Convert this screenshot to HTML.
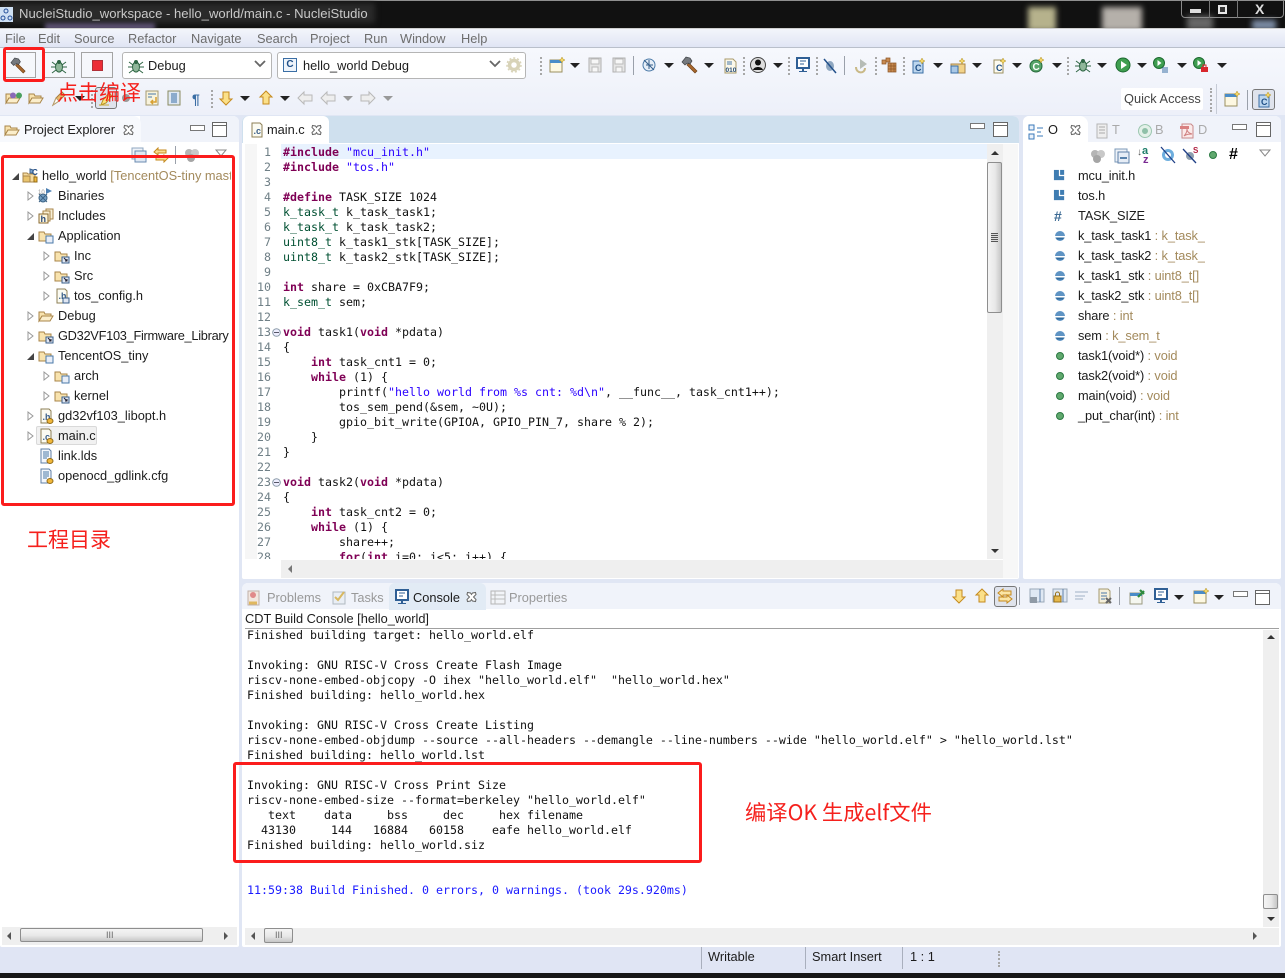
<!DOCTYPE html>
<html lang="zh"><head><meta charset="utf-8"><title>NucleiStudio</title>
<style>
html,body{margin:0;padding:0}
body{width:1285px;height:978px;overflow:hidden;position:relative;background:#e0e6f4;font:12.8px/20px "Liberation Sans","Noto Sans CJK SC",sans-serif;color:#1c1c1c}
div,span.a,svg.i{position:absolute}
.t{position:absolute;white-space:pre;height:20px;line-height:20px}
.ol{letter-spacing:-.12px}
svg.i{width:16px;height:16px;overflow:visible}
.g{color:#8a8a8a}
.m{color:#6d6d6d}
.code{position:absolute;margin:0;font:11.63px/15px "DejaVu Sans Mono","Liberation Mono",monospace;white-space:pre;color:#111}
.k{color:#7f0055;font-weight:bold}
.s{color:#2a00ff}
.y{color:#005032}
.o{color:#a38a5c}
.ln{color:#6f7f86;text-align:right}
.red{position:absolute;border:3px solid #fb1c1c;border-radius:3px;box-sizing:border-box}
.rt{position:absolute;color:#f5201c;white-space:pre;font-family:"Noto Sans CJK SC","Liberation Sans",sans-serif}
.min{position:absolute;width:13px;height:4px;border:1px solid #777;background:#fff;box-sizing:content-box}
.max{position:absolute;width:13px;height:13px;border:1px solid #666;background:#fff;box-sizing:content-box}
.max:before{content:"";position:absolute;left:0;right:0;top:2px;height:1px;background:#666}
.panel{background:#fff;border-radius:6px 6px 2px 2px}
.sb{background:#efefef}
.dots{position:absolute;width:0;border-left:2px dotted #a7a7a7}
.vl{position:absolute;width:1px;background:#9aa0aa}
.btn{position:absolute;box-sizing:border-box;border:1px solid #a4a4a4;background:#f5f7fb}
.arr{position:absolute;width:0;height:0;border-left:5px solid transparent;border-right:5px solid transparent;border-top:5px solid #222}
.th{position:absolute;box-sizing:border-box;border:1px solid #8e8e8e;border-radius:2px;background:linear-gradient(#f4f4f4,#e8e8e8 55%,#c6c6c6)}
.thv{position:absolute;box-sizing:border-box;border:1px solid #8e8e8e;border-radius:2px;background:linear-gradient(90deg,#f4f4f4,#e8e8e8 55%,#c6c6c6)}
</style></head><body>
<svg width="0" height="0" style="position:absolute">
<defs>
<symbol id="fo" viewBox="0 0 16 16"><path d="M1 13V4h5l1 2h6v2H4l-3 5z" fill="#f8e3ae" stroke="#a9864a"/><path d="M1 13l3-5h11l-3 5z" fill="#fbeecb" stroke="#a9864a"/></symbol>
<symbol id="fl" viewBox="0 0 16 16"><path d="M1 13V4h5l1 2h6v7z" fill="#f8e3ae" stroke="#a9864a"/><rect x="8" y="9" width="7" height="6" fill="#dfe6f2" stroke="#3a5f8a"/><path d="M10 10l3 3M13 11v2h-2" stroke="#223" fill="none"/></symbol>
<symbol id="fs" viewBox="0 0 16 16"><path d="M1 13V4h5l1 2h6v7z" fill="#f8e3ae" stroke="#a9864a"/><rect x="8" y="8" width="7" height="7" fill="#e8eef8" stroke="#4a78a8"/></symbol>
<symbol id="h" viewBox="0 0 16 16"><path d="M3 1h8l2 2v12H3z" fill="#fbfbf2" stroke="#8d7f55"/><text x="4.500" y="12" font-size="9" font-family="Liberation Sans" font-weight="bold" fill="#3a5f8a">.h</text><ellipse cx="12" cy="13" rx="3" ry="2.500" fill="#f0b73a" stroke="#946c18"/></symbol>
<symbol id="c" viewBox="0 0 16 16"><path d="M3 1h8l2 2v12H3z" fill="#fbfbf2" stroke="#8d7f55"/><text x="4.500" y="12" font-size="9" font-family="Liberation Sans" font-weight="bold" fill="#3a5f8a">.c</text><ellipse cx="12" cy="13" rx="3" ry="2.500" fill="#f0b73a" stroke="#946c18"/></symbol>
<symbol id="hl" viewBox="0 0 16 16"><path d="M3 1h8l2 2v12H3z" fill="#fbfbf2" stroke="#8d7f55"/><text x="4.500" y="11" font-size="9" font-family="Liberation Sans" font-weight="bold" fill="#3a5f8a">.h</text><rect x="9" y="10" width="6" height="5" fill="#dfe6f2" stroke="#3a5f8a"/></symbol>
<symbol id="tx" viewBox="0 0 16 16"><path d="M3 1h8l2 2v12H3z" fill="#f4f7fc" stroke="#5f7fa6"/><path d="M5 4h6M5 6h6M5 8h6M5 10h4" stroke="#4a78a8"/><ellipse cx="12" cy="13" rx="3" ry="2.500" fill="#f0b73a" stroke="#946c18"/></symbol>
<symbol id="pr" viewBox="0 0 16 16"><path d="M1 5h4l1 1h7v8H1z" fill="#f6dca0" stroke="#a9864a"/><rect x="1" y="8" width="7" height="6" fill="#e9c46f" stroke="#a9864a"/><path d="M8 1l3 1v3H8z" fill="#7ba4d2" stroke="#40658f"/><text x="10" y="7" font-size="8" font-weight="bold" font-family="Liberation Sans" fill="#244f86">C</text><path d="M12 9h3v5h-3z" fill="#f0b73a" stroke="#946c18"/></symbol>
<symbol id="bin" viewBox="0 0 16 16"><circle cx="6" cy="10" r="4" fill="#76a0c4" stroke="#3b6284"/><path d="M2 6l8 8M10 6l-8 8" stroke="#3b6284"/><path d="M9 0l6 3-6 3z" fill="#4d80b3"/><text x="1" y="6" font-size="6" fill="#999" font-family="Liberation Sans">10</text></symbol>
<symbol id="inc" viewBox="0 0 16 16"><path d="M8 1h7v10H8z" fill="#f7efd6" stroke="#a9864a"/><path d="M5 3h7v10H5z" fill="#f9efd3" stroke="#a9864a"/><rect x="1" y="6" width="9" height="9" fill="#fff6dc" stroke="#8a6a30"/><text x="2.500" y="14" font-size="9" font-weight="bold" fill="#2b4b7a" font-family="Liberation Sans">h</text></symbol>
<symbol id="hammer" viewBox="0 0 18 18"><path d="M8 7l8 8-2 2-8-8z" fill="#a8682e" stroke="#6e4018" stroke-width=".7"/><path d="M1 6l4-5 4 1 2 3-2 3-2-1-2 1-1 1z" fill="#75797e" stroke="#3f4246" stroke-width=".7"/></symbol>
<symbol id="bug" viewBox="0 0 16 16"><ellipse cx="8" cy="9" rx="3.500" ry="5" fill="#8fb79a" stroke="#2e6644"/><circle cx="8" cy="4" r="2" fill="#2e6644"/><path d="M1 4l4 3M15 4l-4 3M0 9h4M16 9h-4M1 15l4-3M15 15l-4-3" stroke="#2e6644"/></symbol>
<symbol id="newd" viewBox="0 0 16 16"><rect x="1" y="3" width="12" height="12" fill="#fdf8e2" stroke="#9a8f60"/><rect x="1" y="3" width="12" height="3" fill="#4a8cc8"/><path d="M13 0l1 2 2 1-2 1-1 2-1-2-2-1 2-1z" fill="#f3d56a" stroke="#b09020" stroke-width=".5"/></symbol>
<symbol id="sv" viewBox="0 0 16 16"><path d="M2 1h12v14H2z" fill="#e6e6e6" stroke="#b0b0b0"/><path d="M4 2h8v5H4zM5 10h6v5H5z" fill="#f7f7f7" stroke="#bbb"/></symbol>
<symbol id="gl" viewBox="0 0 16 16"><circle cx="7" cy="8" r="6" fill="#e6eef7" stroke="#4b7aa8"/><path d="M2 3l10 10M4 8h7M7 3v9" stroke="#355e8a"/></symbol>
<symbol id="bf" viewBox="0 0 16 16"><path d="M3 1h8l3 3v11H3z" fill="#fbf8ea" stroke="#a99a6a"/><path d="M5 4h5M5 6h5" stroke="#4a78a8"/><text x="3.500" y="14" font-size="6.500" font-weight="bold" fill="#264d78" font-family="Liberation Sans">010</text></symbol>
<symbol id="usr" viewBox="0 0 16 16"><circle cx="8" cy="8" r="7.500" fill="#ddd" stroke="#444"/><circle cx="8" cy="5.500" r="3" fill="#111"/><path d="M3 13c1-4 9-4 10 0z" fill="#111"/></symbol>
<symbol id="mon" viewBox="0 0 16 16"><rect x="2" y="1" width="12" height="10" fill="#fff" stroke="#2f5f95" stroke-width="2"/><path d="M5 4h6M5 7h4" stroke="#2f5f95"/><path d="M4 14h8v1H4zM7 11h2v3H7z" fill="#2f5f95"/></symbol>
<symbol id="slash" viewBox="0 0 16 16"><ellipse cx="8" cy="8" rx="4" ry="5" fill="#8fa7c0"/><path d="M2 1l12 14" stroke="#22508a" stroke-width="1.500"/></symbol>
<symbol id="rerun" viewBox="0 0 16 16"><path d="M3 9c0 7 9 7 9 1" fill="none" stroke="#c9b987" stroke-width="2"/><path d="M7 1l7 5-7 5z" fill="#b6bcb6"/></symbol>
<symbol id="grid" viewBox="0 0 16 16"><path d="M5 1h4v4H5zM1 3h4v4H1zM7 6h8v9H7z" fill="#c88a50" stroke="#8c5626" stroke-width=".7"/><path d="M7 9h8M7 12h8M10 6v9M13 6v9" stroke="#8c5626" stroke-width=".7"/></symbol>
<symbol id="nc" viewBox="0 0 16 16"><path d="M3 3h10v12H3z" fill="#bcd6ee" stroke="#3a6ea5"/><text x="5" y="13" font-size="9" font-weight="bold" fill="#1f4f87" font-family="Liberation Sans">C</text><path d="M12 0l1 2 2 1-2 1-1 2-1-2-2-1 2-1z" fill="#f3d56a" stroke="#b09020" stroke-width=".5"/></symbol>
<symbol id="nf" viewBox="0 0 16 16"><path d="M1 6h14v9H1z" fill="#f2d38a" stroke="#a9864a"/><rect x="1" y="8" width="7" height="7" fill="#a9c8e6" stroke="#3a6ea5"/><path d="M12 0l1 2 2 1-2 1-1 2-1-2-2-1 2-1z" fill="#f3d56a" stroke="#b09020" stroke-width=".5"/></symbol>
<symbol id="nh" viewBox="0 0 16 16"><path d="M3 2h9v13H3z" fill="#fdfbf0" stroke="#9a8f60"/><text x="5" y="13" font-size="9" font-weight="bold" fill="#1f4f87" font-family="Liberation Sans">C</text><path d="M12 0l1 2 2 1-2 1-1 2-1-2-2-1 2-1z" fill="#f3d56a" stroke="#b09020" stroke-width=".5"/></symbol>
<symbol id="ng" viewBox="0 0 16 16"><circle cx="7" cy="9" r="6" fill="#57a46a" stroke="#24683a"/><text x="3.500" y="13" font-size="10" font-weight="bold" fill="#fff" font-family="Liberation Sans">C</text><path d="M12 0l1 2 2 1-2 1-1 2-1-2-2-1 2-1z" fill="#f3d56a" stroke="#b09020" stroke-width=".5"/></symbol>
<symbol id="run" viewBox="0 0 16 16"><circle cx="8" cy="8" r="7" fill="#3f9e50" stroke="#1d6a30"/><path d="M6 4l6 4-6 4z" fill="#fff"/></symbol>
<symbol id="run2" viewBox="0 0 16 16"><circle cx="6" cy="6" r="5.500" fill="#3f9e50" stroke="#1d6a30"/><path d="M4.500 3l4 3-4 3z" fill="#fff"/><path d="M9 11h6M9 13h6M9 15h6" stroke="#3a6ea5"/></symbol>
<symbol id="run3" viewBox="0 0 16 16"><circle cx="6" cy="6" r="5.500" fill="#3f9e50" stroke="#1d6a30"/><path d="M4.500 3l4 3-4 3z" fill="#fff"/><rect x="8" y="10" width="7" height="5" fill="#d8262c"/><path d="M10 10V8h3v2" fill="none" stroke="#d8262c"/></symbol>
<symbol id="x" viewBox="0 0 12 12"><path d="M1.500 1.500l3 .5 1 1.500 1-1.500 3-.5.5 2-2.500 2.500 2.500 2.500-.5 2-3-.5-1-1.500-1 1.500-3 .5-.5-2L3.500 6 1 3.500z" fill="#fff" stroke="#666"/></symbol>
<symbol id="ua" viewBox="0 0 16 16"><path d="M8 1l6 6h-3v7H5V7H2z" fill="#fbe089" stroke="#c58a1e"/></symbol>
<symbol id="da" viewBox="0 0 16 16"><path d="M8 15l6-6h-3V2H5v7H2z" fill="#fbe089" stroke="#c58a1e"/></symbol>
<symbol id="sync" viewBox="0 0 16 16"><path d="M1 5l5-4v2h8v4H6v2zM15 11l-5 4v-2H2V9h8V7z" fill="#fbe6a6" stroke="#c58a1e"/></symbol>
<symbol id="lar" viewBox="0 0 16 16"><path d="M1 8l6-6v3h8v6H7v3z" fill="#eee" stroke="#b8b8b8"/></symbol>
<symbol id="rar" viewBox="0 0 16 16"><path d="M15 8L9 2v3H1v6h8v3z" fill="#eee" stroke="#b8b8b8"/></symbol>
<symbol id="cfg" viewBox="0 0 16 16"><circle cx="8" cy="8" r="4.500" fill="none" stroke="#d8d3b8" stroke-width="3.500"/><circle cx="8" cy="8" r="7" fill="none" stroke="#d8d3b8" stroke-width="1.500" stroke-dasharray="2 2"/></symbol>
<symbol id="col" viewBox="0 0 16 16"><rect x="1" y="1" width="11" height="11" fill="#eef2f8" stroke="#8fa7c0"/><rect x="4" y="4" width="11" height="11" fill="#dfe8f3" stroke="#6b8bb0"/></symbol>
<symbol id="link" viewBox="0 0 16 16"><path d="M1 5l4-4v2h8v3H5v2zM15 11l-4 4v-2H3v-3h8V8z" fill="#f9dd90" stroke="#c58a1e"/></symbol>
<symbol id="gray" viewBox="0 0 16 16"><circle cx="5" cy="6" r="4" fill="#b5b5b5"/><circle cx="11" cy="6" r="4" fill="#c8c8c8"/><circle cx="7" cy="11" r="4" fill="#a5a5a5"/></symbol>
<symbol id="inchd" viewBox="0 0 14 14"><path d="M1 1h11v11H1z" fill="#3f7db2"/><path d="M7 0v7h6" fill="none" stroke="#fff" stroke-width="1.300"/></symbol>
<symbol id="field" viewBox="0 0 12 12"><circle cx="6" cy="6" r="5" fill="#5f94c4"/><path d="M1 6h10v1.500H1z" fill="#fff"/><path d="M2 7.500h8l-1 2H3z" fill="#2f6a9c"/></symbol>
<symbol id="fn" viewBox="0 0 10 10"><circle cx="5" cy="5" r="3.500" fill="#60a86e" stroke="#2b7a42"/></symbol>
</defs></svg>

<!-- title bar -->
<div style="left:0;top:0;width:1285px;height:28px;background:#111;overflow:hidden">
 <div style="left:0;top:0;width:1285px;height:1px;background:#8f8f8f"></div>
 <div style="left:0;top:3px;width:375px;height:20px;background:#2a2a2a;filter:blur(3px)"></div>
 <div style="left:1028px;top:7px;width:28px;height:24px;background:#b6b28c;filter:blur(3px)"></div>
 <div style="left:1102px;top:7px;width:40px;height:24px;background:#b5b0aa;filter:blur(3px)"></div>
 <div style="left:1187px;top:16px;width:26px;height:14px;background:#666;filter:blur(3px)"></div>
 <div style="left:1252px;top:20px;width:24px;height:10px;background:#7d8da6;filter:blur(3px)"></div>
 <div style="left:45px;top:23px;width:110px;height:8px;background:#5a5070;filter:blur(2px)"></div>
 <div style="left:0;top:7px;width:13px;height:15px;background:#cfe0f4"></div>
 <svg class="i" style="left:0;top:7px;width:13px;height:15px" viewBox="0 0 13 15"><circle cx="6" cy="4" r="2" fill="none" stroke="#26509a"/><circle cx="3" cy="11" r="2" fill="none" stroke="#26509a"/><circle cx="10" cy="11" r="2" fill="none" stroke="#26509a"/></svg>
 <span class="t" style="left:19px;top:4px;color:#c9c9c9;font-size:13.100px">NucleiStudio_workspace - hello_world/main.c - NucleiStudio</span>
 <div style="left:1181px;top:-1px;width:103px;height:19px;border:1px solid #8a8a8a;border-radius:0 0 4px 4px;box-sizing:border-box"></div>
 <div style="left:1209px;top:-1px;width:1px;height:19px;background:#777"></div>
 <div style="left:1237px;top:-1px;width:1px;height:19px;background:#777"></div>
 <div style="left:1190px;top:9px;width:11px;height:4px;background:#ddd"></div>
 <div style="left:1218px;top:5px;width:9px;height:9px;border:2px solid #e6e6e6;box-sizing:border-box;background:#333"></div>
 <span class="t" style="left:1255px;top:-1px;color:#ddd;font-weight:bold;font-size:14px">X</span>
</div>

<!-- menu -->
<div style="left:0;top:28px;width:1285px;height:19px;background:linear-gradient(#f3f5fb,#e0e5f4);border-top:1px solid #cfcfcf;box-sizing:border-box"></div>
<div style="left:0;top:47px;width:1285px;height:1px;background:#b9bfca"></div>
<span class="t m" style="left:5px;top:29px">File</span>
<span class="t m" style="left:38px;top:29px">Edit</span>
<span class="t m" style="left:74px;top:29px">Source</span>
<span class="t m" style="left:128px;top:29px">Refactor</span>
<span class="t m" style="left:191px;top:29px">Navigate</span>
<span class="t m" style="left:257px;top:29px">Search</span>
<span class="t m" style="left:310px;top:29px">Project</span>
<span class="t m" style="left:364px;top:29px">Run</span>
<span class="t m" style="left:400px;top:29px">Window</span>
<span class="t m" style="left:461px;top:29px">Help</span>

<!-- toolbars -->
<div style="left:0;top:48px;width:1285px;height:67px;background:linear-gradient(#f6f8fd,#edf0f9)"></div>
<div class="btn" style="left:5px;top:52px;width:31px;height:26px"></div>
<svg class="i" style="left:10px;top:57px;width:17px;height:17px"><use href="#hammer"/></svg>
<div class="btn" style="left:44px;top:52px;width:31px;height:26px"></div>
<svg class="i" style="left:51px;top:58px"><use href="#bug"/></svg>
<div class="btn" style="left:81px;top:52px;width:32px;height:26px"></div>
<div style="left:92px;top:60px;width:11px;height:11px;background:#ec2d36;border:1px solid #b03038;box-sizing:border-box"></div>
<div style="left:122px;top:52px;width:150px;height:27px;background:#fff;border:1px solid #b5b5b5;border-radius:3px;box-sizing:border-box"></div>
<svg class="i" style="left:128px;top:58px"><use href="#bug"/></svg>
<span class="t" style="left:148px;top:56px">Debug</span>
<svg class="i" style="left:254px;top:60px;width:12px;height:8px" viewBox="0 0 12 8"><path d="M1 1l5 5 5-5" fill="none" stroke="#666" stroke-width="1.800"/></svg>
<div style="left:277px;top:52px;width:249px;height:27px;background:#fff;border:1px solid #b5b5b5;border-radius:3px;box-sizing:border-box"></div>
<div style="left:283px;top:58px;width:14px;height:14px;background:#eef4fb;border:1px solid #3a6ea5;box-sizing:border-box;color:#1f4f87;font:bold 10px/12px 'Liberation Sans';text-align:center">C</div>
<span class="t" style="left:303px;top:56px">hello_world Debug</span>
<svg class="i" style="left:489px;top:60px;width:12px;height:8px" viewBox="0 0 12 8"><path d="M1 1l5 5 5-5" fill="none" stroke="#666" stroke-width="1.800"/></svg>
<svg class="i" style="left:506px;top:57px"><use href="#cfg"/></svg>

<div class="dots" style="left:540px;top:57px;height:18px"></div>
<svg class="i" style="left:549px;top:57px"><use href="#newd"/></svg><div class="arr" style="left:570px;top:63px"></div>
<svg class="i" style="left:587px;top:57px"><use href="#sv"/></svg>
<svg class="i" style="left:611px;top:57px"><use href="#sv"/></svg>
<div class="vl" style="left:633px;top:56px;height:19px"></div>
<svg class="i" style="left:642px;top:57px"><use href="#gl"/></svg><div class="arr" style="left:664px;top:63px"></div>
<svg class="i" style="left:681px;top:56px;width:18px;height:18px"><use href="#hammer"/></svg><div class="arr" style="left:704px;top:63px"></div>
<svg class="i" style="left:722px;top:58px"><use href="#bf"/></svg>
<div class="dots" style="left:743px;top:57px;height:18px"></div>
<svg class="i" style="left:750px;top:57px"><use href="#usr"/></svg><div class="arr" style="left:773px;top:63px"></div>
<div class="dots" style="left:788px;top:57px;height:18px"></div>
<svg class="i" style="left:795px;top:57px"><use href="#mon"/></svg>
<div class="dots" style="left:816px;top:57px;height:18px"></div>
<svg class="i" style="left:822px;top:58px"><use href="#slash"/></svg>
<div class="vl" style="left:844px;top:56px;height:19px"></div>
<svg class="i" style="left:853px;top:58px"><use href="#rerun"/></svg>
<div class="dots" style="left:875px;top:57px;height:18px"></div>
<svg class="i" style="left:881px;top:57px"><use href="#grid"/></svg>
<div class="dots" style="left:903px;top:57px;height:18px"></div>
<svg class="i" style="left:910px;top:58px"><use href="#nc"/></svg><div class="arr" style="left:933px;top:63px"></div>
<svg class="i" style="left:950px;top:58px"><use href="#nf"/></svg><div class="arr" style="left:972px;top:63px"></div>
<svg class="i" style="left:991px;top:58px"><use href="#nh"/></svg><div class="arr" style="left:1012px;top:63px"></div>
<svg class="i" style="left:1029px;top:57px"><use href="#ng"/></svg><div class="arr" style="left:1052px;top:63px"></div>
<div class="dots" style="left:1067px;top:57px;height:18px"></div>
<svg class="i" style="left:1075px;top:57px"><use href="#bug"/></svg><div class="arr" style="left:1097px;top:63px"></div>
<svg class="i" style="left:1115px;top:57px"><use href="#run"/></svg><div class="arr" style="left:1137px;top:63px"></div>
<svg class="i" style="left:1153px;top:57px"><use href="#run2"/></svg><div class="arr" style="left:1177px;top:63px"></div>
<svg class="i" style="left:1193px;top:57px"><use href="#run3"/></svg><div class="arr" style="left:1217px;top:63px"></div>

<!-- row 2 -->
<svg class="i" style="left:5px;top:90px"><use href="#fo"/></svg>
<svg class="i" style="left:9px;top:92px;width:14px;height:7px" viewBox="0 0 14 7"><circle cx="4" cy="3.500" r="3" fill="#8a6ab8"/><circle cx="10" cy="3.500" r="3" fill="#4aa060"/></svg>
<svg class="i" style="left:28px;top:90px"><use href="#fo"/></svg>
<svg class="i" style="left:50px;top:90px" viewBox="0 0 16 16"><path d="M3 15l3-7 6-6 3 3-6 6z" fill="#e8b86a" stroke="#a87a3a"/><path d="M3 15l3-7 3 3z" fill="#fff" stroke="#b8a070"/></svg>
<div class="arr" style="left:75px;top:96px"></div>
<div class="dots" style="left:91px;top:90px;height:18px"></div>
<div style="left:95px;top:87px;width:22px;height:22px;border:1px solid #777;border-radius:3px;background:#dfe3ec;box-sizing:border-box"></div>
<svg class="i" style="left:98px;top:90px" viewBox="0 0 16 16"><path d="M3 15l2-5 6-7 3 3-6 7z" fill="#fbe27a" stroke="#b89020"/><path d="M1 15h10" stroke="#c8a830"/></svg>
<svg class="i" style="left:121px;top:93px;width:10px;height:10px" viewBox="0 0 10 10"><circle cx="5" cy="5" r="4" fill="#9a9a9a"/></svg>
<svg class="i" style="left:144px;top:90px" viewBox="0 0 16 16"><path d="M2 1h12v14H2z" fill="#f8f3dc" stroke="#a59a70"/><path d="M4 4h8M4 7h4" stroke="#4a78a8"/><path d="M12 7v5H7M9 10l-2 2 2 2" fill="none" stroke="#d8a030" stroke-width="1.500"/></svg>
<svg class="i" style="left:166px;top:90px" viewBox="0 0 16 16"><path d="M2 1h12v14H2z" fill="#dfe8f3" stroke="#8a8a60"/><path d="M5 4h6M5 6h6M5 8h6M5 10h6M5 12h6" stroke="#3a6ea5"/></svg>
<span class="t" style="left:192px;top:89px;color:#3a6ea5;font-weight:bold;font-size:14px">¶</span>
<div class="dots" style="left:211px;top:90px;height:18px"></div>
<svg class="i" style="left:218px;top:90px"><use href="#da"/></svg><div class="arr" style="left:240px;top:96px"></div>
<svg class="i" style="left:258px;top:90px"><use href="#ua"/></svg><div class="arr" style="left:280px;top:96px"></div>
<svg class="i" style="left:297px;top:90px"><use href="#lar"/></svg>
<svg class="i" style="left:320px;top:90px"><use href="#lar"/></svg><div class="arr" style="left:343px;top:96px;border-top-color:#999"></div>
<svg class="i" style="left:360px;top:90px"><use href="#rar"/></svg><div class="arr" style="left:383px;top:96px;border-top-color:#999"></div>
<div style="left:1121px;top:88px;width:82px;height:22px;background:#fff;border-radius:2px"></div>
<span class="t" style="left:1124px;top:89px;color:#444">Quick Access</span>
<div class="dots" style="left:1210px;top:88px;height:24px"></div>
<div class="vl" style="left:1216px;top:84px;height:30px;background:#c6cbd6"></div>
<svg class="i" style="left:1224px;top:91px"><use href="#newd"/></svg>
<div class="vl" style="left:1247px;top:90px;height:20px"></div>
<div style="left:1252px;top:89px;width:23px;height:21px;border:1px solid #777;border-radius:3px;background:#dfe3ec;box-sizing:border-box"></div>
<svg class="i" style="left:1256px;top:92px"><use href="#nc"/></svg>

<!-- left panel -->
<div class="panel" style="left:0;top:116px;width:239px;height:831px"></div>
<div style="left:140px;top:116px;width:99px;height:26px;background:#f0f3fa;border-radius:0 6px 0 0"></div>
<div style="left:0;top:116px;width:141px;height:26px;background:#f7f9fd;border-radius:0 8px 0 0"></div>
<svg class="i" style="left:4px;top:122px"><use href="#fo"/></svg>
<span class="t" style="left:24px;top:120px">Project Explorer</span>
<svg class="i" style="left:123px;top:124px;width:12px;height:12px"><use href="#x"/></svg>
<div class="min" style="left:190px;top:125px"></div><div class="max" style="left:212px;top:122px"></div>
<svg class="i" style="left:131px;top:147px"><use href="#col"/></svg>
<svg class="i" style="left:153px;top:147px"><use href="#link"/></svg>
<div class="vl" style="left:175px;top:146px;height:18px"></div>
<svg class="i" style="left:184px;top:147px"><use href="#gray"/></svg>
<svg class="i" style="left:215px;top:149px;width:12px;height:8px" viewBox="0 0 12 8"><path d="M1 1h10L6 7z" fill="#fff" stroke="#888"/></svg>

<div style="left:12px;top:173px;width:0;height:0;border-left:7px solid transparent;border-bottom:7px solid #444"></div>
<svg class="i" style="left:22px;top:168px"><use href="#pr"/></svg>
<span class="t" style="left:42px;top:166px;width:189px;overflow:hidden">hello_world <span class="o">[TencentOS-tiny master]</span></span>
<svg class="i" style="left:27px;top:191px;width:7px;height:10px" viewBox="0 0 7 10"><path d="M1 1l5 4-5 4z" fill="#fff" stroke="#999"/></svg>
<svg class="i" style="left:37px;top:188px"><use href="#bin"/></svg><span class="t" style="left:58px;top:186px">Binaries</span>
<svg class="i" style="left:27px;top:211px;width:7px;height:10px" viewBox="0 0 7 10"><path d="M1 1l5 4-5 4z" fill="#fff" stroke="#999"/></svg>
<svg class="i" style="left:38px;top:208px"><use href="#inc"/></svg><span class="t" style="left:58px;top:206px">Includes</span>
<div style="left:27px;top:233px;width:0;height:0;border-left:7px solid transparent;border-bottom:7px solid #444"></div>
<svg class="i" style="left:38px;top:228px"><use href="#fs"/></svg><span class="t" style="left:58px;top:226px">Application</span>
<svg class="i" style="left:43px;top:251px;width:7px;height:10px" viewBox="0 0 7 10"><path d="M1 1l5 4-5 4z" fill="#fff" stroke="#999"/></svg>
<svg class="i" style="left:54px;top:248px"><use href="#fl"/></svg><span class="t" style="left:74px;top:246px">Inc</span>
<svg class="i" style="left:43px;top:271px;width:7px;height:10px" viewBox="0 0 7 10"><path d="M1 1l5 4-5 4z" fill="#fff" stroke="#999"/></svg>
<svg class="i" style="left:54px;top:268px"><use href="#fl"/></svg><span class="t" style="left:74px;top:266px">Src</span>
<svg class="i" style="left:43px;top:291px;width:7px;height:10px" viewBox="0 0 7 10"><path d="M1 1l5 4-5 4z" fill="#fff" stroke="#999"/></svg>
<svg class="i" style="left:54px;top:288px"><use href="#hl"/></svg><span class="t" style="left:74px;top:286px">tos_config.h</span>
<svg class="i" style="left:27px;top:311px;width:7px;height:10px" viewBox="0 0 7 10"><path d="M1 1l5 4-5 4z" fill="#fff" stroke="#999"/></svg>
<svg class="i" style="left:38px;top:308px"><use href="#fo"/></svg><span class="t" style="left:58px;top:306px">Debug</span>
<svg class="i" style="left:27px;top:331px;width:7px;height:10px" viewBox="0 0 7 10"><path d="M1 1l5 4-5 4z" fill="#fff" stroke="#999"/></svg>
<svg class="i" style="left:38px;top:328px"><use href="#fl"/></svg><span class="t" style="left:58px;top:326px;letter-spacing:-.28px">GD32VF103_Firmware_Library</span>
<div style="left:27px;top:353px;width:0;height:0;border-left:7px solid transparent;border-bottom:7px solid #444"></div>
<svg class="i" style="left:38px;top:348px"><use href="#fs"/></svg><span class="t" style="left:58px;top:346px">TencentOS_tiny</span>
<svg class="i" style="left:43px;top:371px;width:7px;height:10px" viewBox="0 0 7 10"><path d="M1 1l5 4-5 4z" fill="#fff" stroke="#999"/></svg>
<svg class="i" style="left:54px;top:368px"><use href="#fs"/></svg><span class="t" style="left:74px;top:366px">arch</span>
<svg class="i" style="left:43px;top:391px;width:7px;height:10px" viewBox="0 0 7 10"><path d="M1 1l5 4-5 4z" fill="#fff" stroke="#999"/></svg>
<svg class="i" style="left:54px;top:388px"><use href="#fl"/></svg><span class="t" style="left:74px;top:386px">kernel</span>
<svg class="i" style="left:27px;top:411px;width:7px;height:10px" viewBox="0 0 7 10"><path d="M1 1l5 4-5 4z" fill="#fff" stroke="#999"/></svg>
<svg class="i" style="left:38px;top:408px"><use href="#h"/></svg><span class="t" style="left:58px;top:406px">gd32vf103_libopt.h</span>
<svg class="i" style="left:27px;top:431px;width:7px;height:10px" viewBox="0 0 7 10"><path d="M1 1l5 4-5 4z" fill="#fff" stroke="#999"/></svg>
<div style="left:36px;top:426px;width:61px;height:19px;background:#f1f1f1;border:1px solid #d9d9d9;border-radius:2px;box-sizing:border-box"></div>
<svg class="i" style="left:38px;top:428px"><use href="#c"/></svg><span class="t" style="left:58px;top:426px">main.c</span>
<svg class="i" style="left:38px;top:448px"><use href="#tx"/></svg><span class="t" style="left:58px;top:446px">link.lds</span>
<svg class="i" style="left:38px;top:468px"><use href="#tx"/></svg><span class="t" style="left:58px;top:466px">openocd_gdlink.cfg</span>

<div class="sb" style="left:2px;top:927px;width:235px;height:18px"></div>
<div class="th" style="left:20px;top:928px;width:183px;height:14px"></div>
<span class="t" style="left:106px;top:925px;font-size:9px;color:#666">III</span>
<div style="left:7px;top:932px;width:0;height:0;border-top:4px solid transparent;border-bottom:4px solid transparent;border-right:4px solid #555"></div>
<div style="left:224px;top:932px;width:0;height:0;border-top:4px solid transparent;border-bottom:4px solid transparent;border-left:4px solid #555"></div>

<!-- editor -->
<div class="panel" style="left:242px;top:116px;width:777px;height:463px"></div>
<div style="left:242px;top:116px;width:777px;height:27px;background:#cfe0ee;border-radius:6px 6px 0 0"></div>
<div style="left:243px;top:116px;width:86px;height:28px;background:#fff;border-radius:6px 6px 0 0"></div>
<svg class="i" style="left:249px;top:122px" viewBox="0 0 16 16"><path d="M3 1h8l2 2v12H3z" fill="#fbfbf2" stroke="#8d7f55"/><text x="4.500" y="12" font-size="9" font-family="Liberation Sans" font-weight="bold" fill="#3a5f8a">.c</text></svg>
<span class="t" style="left:267px;top:120px">main.c</span>
<svg class="i" style="left:311px;top:124px;width:12px;height:12px"><use href="#x"/></svg>
<div class="min" style="left:970px;top:123px"></div><div class="max" style="left:993px;top:122px"></div>
<div style="left:245px;top:144px;width:12px;height:415px;background:#f6f6f6"></div>
<div style="left:281px;top:144px;width:706px;height:15px;background:#e8f2fe"></div>
<pre class="code ln" style="left:245px;top:145px;width:26px;height:414px;overflow:hidden">1
2
3
4
5
6
7
8
9
10
11
12
13
14
15
16
17
18
19
20
21
22
23
24
25
26
27
28</pre>
<svg class="i" style="left:272px;top:328px;width:9px;height:9px" viewBox="0 0 9 9"><circle cx="4.500" cy="4.500" r="3.800" fill="#eef" stroke="#8a9aa8"/><path d="M2 4.500h5" stroke="#556"/></svg>
<svg class="i" style="left:272px;top:478px;width:9px;height:9px" viewBox="0 0 9 9"><circle cx="4.500" cy="4.500" r="3.800" fill="#eef" stroke="#8a9aa8"/><path d="M2 4.500h5" stroke="#556"/></svg>
<pre class="code" style="left:283px;top:145px;width:700px;height:414px;overflow:hidden"><span class="k">#include</span> <span class="s">"mcu_init.h"</span>
<span class="k">#include</span> <span class="s">"tos.h"</span>

<span class="k">#define</span> TASK_SIZE 1024
<span class="y">k_task_t</span> k_task_task1;
<span class="y">k_task_t</span> k_task_task2;
<span class="y">uint8_t</span> k_task1_stk[TASK_SIZE];
<span class="y">uint8_t</span> k_task2_stk[TASK_SIZE];

<span class="k">int</span> share = 0xCBA7F9;
<span class="y">k_sem_t</span> sem;

<span class="k">void</span> task1(<span class="k">void</span> *pdata)
{
    <span class="k">int</span> task_cnt1 = 0;
    <span class="k">while</span> (1) {
        printf(<span class="s">"hello world from %s cnt: %d\n"</span>, __func__, task_cnt1++);
        tos_sem_pend(&amp;sem, ~0U);
        gpio_bit_write(GPIOA, GPIO_PIN_7, share % 2);
    }
}

<span class="k">void</span> task2(<span class="k">void</span> *pdata)
{
    <span class="k">int</span> task_cnt2 = 0;
    <span class="k">while</span> (1) {
        share++;
        <span class="k">for</span>(<span class="k">int</span> i=0; i&lt;5; i++) {</pre>
<div class="sb" style="left:987px;top:144px;width:16px;height:415px"></div>
<div style="left:1003px;top:144px;width:15px;height:434px;background:#f7f7f7"></div>
<div class="thv" style="left:987px;top:162px;width:15px;height:151px"></div>
<div style="left:991px;top:233px;width:7px;height:9px;background:repeating-linear-gradient(#555 0 1px,#ddd 1px 2px)"></div>
<div style="left:991px;top:151px;width:0;height:0;border-left:4px solid transparent;border-right:4px solid transparent;border-bottom:4px solid #333"></div>
<div style="left:991px;top:549px;width:0;height:0;border-left:4px solid transparent;border-right:4px solid transparent;border-top:4px solid #333"></div>
<div class="sb" style="left:281px;top:560px;width:722px;height:18px"></div>
<div style="left:288px;top:565px;width:0;height:0;border-top:4px solid transparent;border-bottom:4px solid transparent;border-right:4px solid #777"></div>

<!-- outline -->
<div class="panel" style="left:1023px;top:116px;width:258px;height:463px"></div>
<div style="left:1023px;top:116px;width:258px;height:26px;background:#f0f3fa;border-radius:6px 6px 0 0"></div>
<div style="left:1023px;top:116px;width:65px;height:27px;background:#fff;border-radius:6px 8px 0 0"></div>
<svg class="i" style="left:1028px;top:124px" viewBox="0 0 16 16"><path d="M1 1h5v5H1zM1 10h5v5H1z" fill="#eaf2fb" stroke="#3a78b8"/><path d="M9 4h6M9 8h4M9 12h6" stroke="#3a78b8"/></svg>
<span class="t" style="left:1048px;top:120px">O</span>
<svg class="i" style="left:1070px;top:124px;width:12px;height:12px"><use href="#x"/></svg>
<svg class="i" style="left:1094px;top:123px" viewBox="0 0 16 16"><path d="M3 1h10v14H3z" fill="#eee" stroke="#b5b5b5"/><path d="M5 4h6M5 7h6M5 10h6" stroke="#aaa"/></svg>
<span class="t g" style="left:1112px;top:120px;color:#aaa">T</span>
<svg class="i" style="left:1137px;top:123px" viewBox="0 0 16 16"><circle cx="8" cy="8" r="6.500" fill="#e3f0e8" stroke="#9cc7b0"/><circle cx="8" cy="8" r="3" fill="#8fc0a8"/></svg>
<span class="t g" style="left:1155px;top:120px;color:#aaa">B</span>
<svg class="i" style="left:1179px;top:123px" viewBox="0 0 16 16"><path d="M3 1h9l2 2v12H3z" fill="#fbeaea" stroke="#c98a8a"/><path d="M1 3h9v3H1z" fill="#d98080"/><path d="M5 13c3-3 3-6 3-7 0 3 2 4 5 5-3 0-5 0-8 2z" fill="none" stroke="#d08080"/></svg>
<span class="t g" style="left:1198px;top:120px;color:#aaa">D</span>
<div class="min" style="left:1232px;top:124px"></div><div class="max" style="left:1256px;top:122px"></div>
<svg class="i" style="left:1090px;top:148px"><use href="#gray"/></svg>
<svg class="i" style="left:1114px;top:148px" viewBox="0 0 16 16"><rect x="1" y="1" width="12" height="13" fill="#eef2f8" stroke="#7c9ab8"/><rect x="4" y="4" width="11" height="11" fill="#e6edf6" stroke="#5e80a8"/><path d="M6 10h7" stroke="#2a5f94" stroke-width="1.500"/></svg>
<span class="t" style="left:1137px;top:148px;font-size:10px;line-height:10px;height:10px;color:#555">↓</span>
<span class="t" style="left:1142px;top:146px;font:bold 11px/11px 'Liberation Sans';color:#1e7e6a;height:11px">a</span>
<span class="t" style="left:1143px;top:155px;font:bold 11px/11px 'Liberation Sans';color:#7a2a92;height:11px">z</span>
<svg class="i" style="left:1160px;top:147px" viewBox="0 0 16 16"><circle cx="8" cy="8" r="6" fill="#6eaede"/><circle cx="8" cy="8" r="3" fill="#fff"/><path d="M1 0l14 16" stroke="#1f3f86" stroke-width="1.300"/></svg>
<svg class="i" style="left:1183px;top:147px" viewBox="0 0 16 16"><circle cx="7" cy="9" r="4" fill="#8f9fae"/><path d="M0 2l13 14" stroke="#1f3f86" stroke-width="1.300"/><text x="10" y="6" font-size="8" font-weight="bold" fill="#b02040" font-family="Liberation Sans">S</text></svg>
<svg class="i" style="left:1208px;top:150px;width:10px;height:10px"><use href="#fn"/></svg>
<span class="t" style="left:1229px;top:145px;font:bold 16px/20px 'Liberation Sans';color:#000">#</span>
<svg class="i" style="left:1259px;top:149px;width:12px;height:8px" viewBox="0 0 12 8"><path d="M1 1h10L6 7z" fill="#fff" stroke="#888"/></svg>

<svg class="i" style="left:1053px;top:169px;width:13px;height:13px"><use href="#inchd"/></svg><span class="t ol" style="left:1078px;top:166px">mcu_init.h</span>
<svg class="i" style="left:1053px;top:189px;width:13px;height:13px"><use href="#inchd"/></svg><span class="t ol" style="left:1078px;top:186px">tos.h</span>
<span class="t" style="left:1054px;top:206px;font-weight:bold;color:#3d6b94;font-size:14px">#</span><span class="t ol" style="left:1078px;top:206px">TASK_SIZE</span>
<svg class="i" style="left:1054px;top:230px;width:12px;height:12px"><use href="#field"/></svg><span class="t ol" style="left:1078px;top:226px;width:127px;overflow:hidden">k_task_task1<span class="o"> : k_task_t</span></span>
<svg class="i" style="left:1054px;top:250px;width:12px;height:12px"><use href="#field"/></svg><span class="t ol" style="left:1078px;top:246px;width:127px;overflow:hidden">k_task_task2<span class="o"> : k_task_t</span></span>
<svg class="i" style="left:1054px;top:270px;width:12px;height:12px"><use href="#field"/></svg><span class="t ol" style="left:1078px;top:266px">k_task1_stk<span class="o"> : uint8_t[]</span></span>
<svg class="i" style="left:1054px;top:290px;width:12px;height:12px"><use href="#field"/></svg><span class="t ol" style="left:1078px;top:286px">k_task2_stk<span class="o"> : uint8_t[]</span></span>
<svg class="i" style="left:1054px;top:310px;width:12px;height:12px"><use href="#field"/></svg><span class="t ol" style="left:1078px;top:306px">share<span class="o"> : int</span></span>
<svg class="i" style="left:1054px;top:330px;width:12px;height:12px"><use href="#field"/></svg><span class="t ol" style="left:1078px;top:326px">sem<span class="o"> : k_sem_t</span></span>
<svg class="i" style="left:1055px;top:351px;width:10px;height:10px"><use href="#fn"/></svg><span class="t ol" style="left:1078px;top:346px">task1(void*)<span class="o"> : void</span></span>
<svg class="i" style="left:1055px;top:371px;width:10px;height:10px"><use href="#fn"/></svg><span class="t ol" style="left:1078px;top:366px">task2(void*)<span class="o"> : void</span></span>
<svg class="i" style="left:1055px;top:391px;width:10px;height:10px"><use href="#fn"/></svg><span class="t ol" style="left:1078px;top:386px">main(void)<span class="o"> : void</span></span>
<svg class="i" style="left:1055px;top:411px;width:10px;height:10px"><use href="#fn"/></svg><span class="t ol" style="left:1078px;top:406px">_put_char(int)<span class="o"> : int</span></span>

<!-- console -->
<div class="panel" style="left:242px;top:583px;width:1039px;height:364px"></div>
<div style="left:242px;top:583px;width:1039px;height:26px;background:#f0f3fa;border-radius:6px 6px 0 0"></div>
<div style="left:389px;top:583px;width:97px;height:27px;background:#e2ebf5;border-radius:6px 6px 0 0"></div>
<svg class="i" style="left:246px;top:590px" viewBox="0 0 16 16"><path d="M2 1h11v14H2z" fill="#f2e7e0" stroke="#c0b0a8"/><circle cx="7" cy="5" r="3" fill="#e08a8a"/><path d="M3 13h8" stroke="#e0b860" stroke-width="3"/></svg>
<span class="t" style="left:267px;top:588px;color:#999">Problems</span>
<svg class="i" style="left:331px;top:589px" viewBox="0 0 16 16"><path d="M2 3h12v12H2z" fill="#e9eef5" stroke="#b0b8c0"/><path d="M4 8l3 3 6-8" fill="none" stroke="#d8b860" stroke-width="2"/></svg>
<span class="t" style="left:351px;top:588px;color:#999">Tasks</span>
<svg class="i" style="left:394px;top:589px"><use href="#mon"/></svg>
<span class="t" style="left:413px;top:588px">Console</span>
<svg class="i" style="left:466px;top:591px;width:12px;height:12px"><use href="#x"/></svg>
<svg class="i" style="left:490px;top:590px" viewBox="0 0 16 16"><path d="M1 1h14v13H1z" fill="#f2f4f8" stroke="#b5b5b5"/><path d="M1 5h14M1 9h14M5 1v13" stroke="#bbb"/></svg>
<span class="t" style="left:509px;top:588px;color:#999">Properties</span>
<svg class="i" style="left:951px;top:588px"><use href="#da"/></svg>
<svg class="i" style="left:974px;top:588px"><use href="#ua"/></svg>
<div style="left:994px;top:586px;width:23px;height:21px;border:1px solid #777;border-radius:3px;background:#dfe3ec;box-sizing:border-box"></div>
<svg class="i" style="left:997px;top:588px"><use href="#sync"/></svg>
<div class="vl" style="left:1019px;top:587px;height:18px"></div>
<svg class="i" style="left:1029px;top:588px" viewBox="0 0 16 16"><path d="M1 1h14v13H1z" fill="#dfe8f3" stroke="#9aa8b8"/><path d="M11 1v13" stroke="#5f80a8"/><rect x="1" y="9" width="7" height="6" fill="#8f9aa6"/></svg>
<svg class="i" style="left:1052px;top:588px" viewBox="0 0 16 16"><path d="M1 1h14v13H1z" fill="#dfe8f3" stroke="#9aa8b8"/><path d="M11 1v13" stroke="#5f80a8"/><rect x="2" y="8" width="7" height="6" fill="#e5b84c" stroke="#9a7218"/><path d="M3.500 8V6a2 2 0 014 0v2" fill="none" stroke="#9a7218"/></svg>
<svg class="i" style="left:1074px;top:588px" viewBox="0 0 16 16"><path d="M1 4h13M1 8h10M1 11h8" stroke="#b0bfd0" stroke-width="1.300"/></svg>
<svg class="i" style="left:1097px;top:588px" viewBox="0 0 16 16"><path d="M2 1h9l2 2v12H2z" fill="#f5f0dc" stroke="#a59a70"/><path d="M4 5h6M4 8h6M4 11h4" stroke="#4a78a8"/><path d="M9 10l5 5M14 10l-5 5" stroke="#666" stroke-width="2"/></svg>
<div class="vl" style="left:1119px;top:587px;height:18px"></div>
<svg class="i" style="left:1129px;top:589px" viewBox="0 0 16 16"><rect x="1" y="4" width="12" height="11" fill="#f5f7f0" stroke="#9a9a80"/><rect x="1" y="4" width="12" height="3" fill="#4a8cc8"/><path d="M9 8l6-6M11 1l4 4" stroke="#2e8b3e" stroke-width="2.200"/></svg>
<svg class="i" style="left:1153px;top:588px"><use href="#mon"/></svg><div class="arr" style="left:1174px;top:595px"></div>
<svg class="i" style="left:1193px;top:588px"><use href="#newd"/></svg><div class="arr" style="left:1214px;top:595px"></div>
<div class="min" style="left:1233px;top:591px"></div><div class="max" style="left:1255px;top:590px"></div>
<span class="t" style="left:245px;top:609px">CDT Build Console [hello_world]</span>
<div style="left:245px;top:628px;width:1034px;height:1px;background:#a0a0a0"></div>
<pre class="code" style="left:247px;top:628px;width:1015px;height:299px;overflow:hidden">Finished building target: hello_world.elf

Invoking: GNU RISC-V Cross Create Flash Image
riscv-none-embed-objcopy -O ihex "hello_world.elf"  "hello_world.hex"
Finished building: hello_world.hex

Invoking: GNU RISC-V Cross Create Listing
riscv-none-embed-objdump --source --all-headers --demangle --line-numbers --wide "hello_world.elf" &gt; "hello_world.lst"
Finished building: hello_world.lst

Invoking: GNU RISC-V Cross Print Size
riscv-none-embed-size --format=berkeley "hello_world.elf"
   text    data     bss     dec     hex filename
  43130     144   16884   60158    eafe hello_world.elf
Finished building: hello_world.siz


<span style="color:#1a1aff">11:59:38 Build Finished. 0 errors, 0 warnings. (took 29s.920ms)</span></pre>
<div class="sb" style="left:1263px;top:630px;width:16px;height:297px"></div>
<div class="thv" style="left:1263px;top:894px;width:15px;height:15px"></div>
<div style="left:1267px;top:635px;width:0;height:0;border-left:4px solid transparent;border-right:4px solid transparent;border-bottom:4px solid #333"></div>
<div style="left:1267px;top:917px;width:0;height:0;border-left:4px solid transparent;border-right:4px solid transparent;border-top:4px solid #333"></div>
<div class="sb" style="left:245px;top:928px;width:1034px;height:17px"></div>
<div class="th" style="left:264px;top:928px;width:29px;height:15px"></div>
<span class="t" style="left:275px;top:925px;font-size:9px;color:#666">III</span>
<div style="left:251px;top:932px;width:0;height:0;border-top:4px solid transparent;border-bottom:4px solid transparent;border-right:4px solid #555"></div>
<div style="left:1253px;top:932px;width:0;height:0;border-top:4px solid transparent;border-bottom:4px solid transparent;border-left:4px solid #555"></div>

<!-- status -->
<div style="left:0;top:947px;width:1285px;height:26px;background:#e0e5f4"></div>
<div style="left:701px;top:947px;width:1px;height:22px;background:#a9afbd"></div>
<div style="left:805px;top:947px;width:1px;height:22px;background:#a9afbd"></div>
<div style="left:902px;top:947px;width:1px;height:22px;background:#a9afbd"></div>
<div class="dots" style="left:998px;top:951px;height:16px"></div>
<span class="t" style="left:708px;top:947px">Writable</span>
<span class="t" style="left:812px;top:947px">Smart Insert</span>
<span class="t" style="left:910px;top:947px">1 : 1</span>
<div style="left:0;top:973px;width:1285px;height:5px;background:#171717"></div>

<!-- annotations -->
<div class="red" style="left:3px;top:47px;width:42px;height:35px"></div>
<div class="red" style="left:1px;top:155px;width:234px;height:351px"></div>
<div class="red" style="left:233px;top:762px;width:469px;height:101px"></div>
<span class="rt" style="left:57px;top:78px;font-size:21px;line-height:28px">点击编译</span>
<span class="rt" style="left:27px;top:524px;font-size:21px;line-height:30px">工程目录</span>
<span class="rt" style="left:745px;top:797px;font-size:21.300px;line-height:30px">编译OK 生成elf文件</span>
</body></html>
